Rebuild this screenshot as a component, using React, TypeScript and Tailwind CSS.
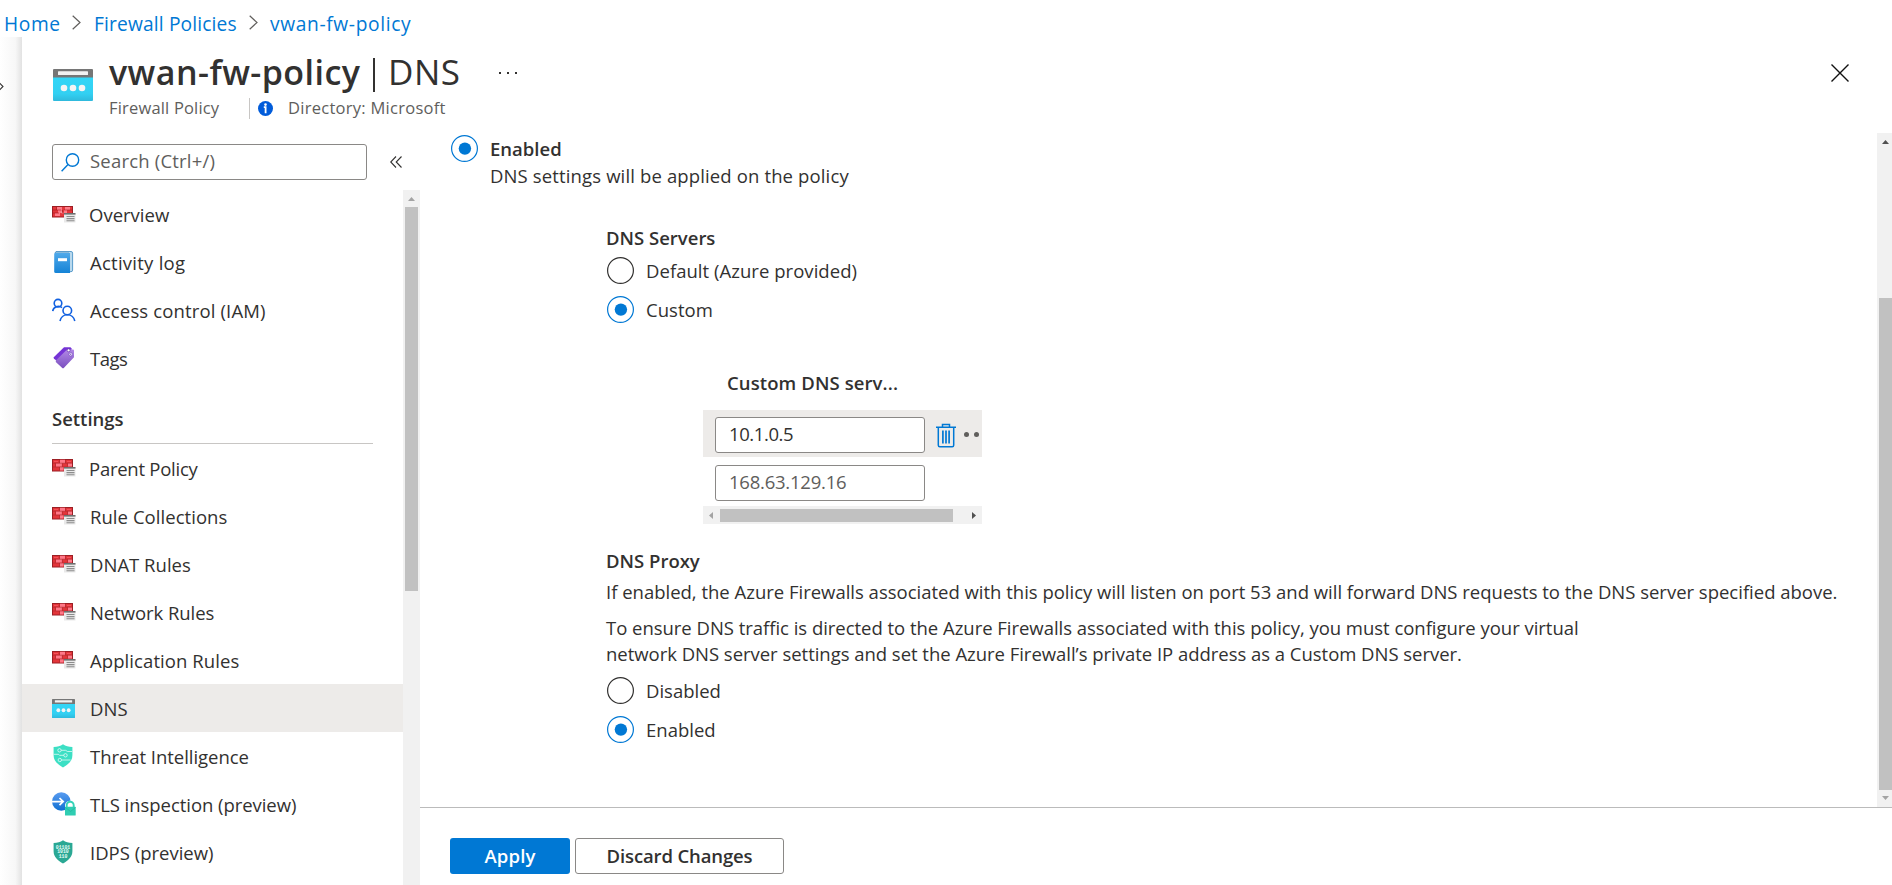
import React from 'react';

function FirewallIcon({ variant = 0 }: { variant?: number }) {
  const y = variant === 1 ? 4 : 3;
  return (
    <svg width="24" height="24" viewBox="0 0 24 24">
      <rect x="0.5" y={y + 0.5} width="20" height={14.5 - y} fill="#e3353a" stroke="#9c1f24" />
      {variant === 1 ? (
        <>
          <path d="M5 6.5h5M13 6.5h5M6 9.5h3.5M12 9.5h3M3 12.500h5" stroke="#ff7b88" strokeWidth="3" />
          <path d="M1 8h8M12 8h8M4.500 5v3M10.500 8v3M1 11h6" stroke="#a01a20" strokeWidth="0.6" />
          <path d="M9.500 8.500v2.500h2" stroke="#fff" strokeOpacity="0.5" strokeWidth="0.7" fill="none" />
        </>
      ) : (
        <>
          <path d="M8 5.500h5M4 9h6M16 9h4M8 12.800h3.500" stroke="#ff7888" strokeWidth="3.400" />
          <path d="M1 7.200h19.500M1 11h19.500M7.500 4v3M13.500 4v3M3.500 7.500v3M10.300 7.500v3M15.500 7.500v3M7.500 11v3.500" stroke="#a3262b" strokeOpacity="0.800" strokeWidth="0.700" />
          <path d="M2 5.500h4M15 5.500h4" stroke="#f4525a" strokeWidth="1" />
        </>
      )}
      <rect x="12" y="11.500" width="11.500" height="9" fill="#e9e9e9" />
      <rect x="12" y="11" width="11.500" height="1.600" fill="#6f6f6f" />
      <path d="M14.500 14.500h8M14.500 16.600h8M14.500 18.700h8" stroke="#8d8d8d" strokeWidth="1.100" />
    </svg>
  );
}

function LogIcon() {
  return (
    <svg width="24" height="24" viewBox="0 0 24 24">
      <defs>
        <linearGradient id="logg" x1="0" y1="0" x2="0" y2="1">
          <stop offset="0" stopColor="#4fa9ea" />
          <stop offset="1" stopColor="#1583d6" />
        </linearGradient>
      </defs>
      <path d="M4 1.500h15a1.600 1.600 0 0 1 1.600 1.600v17a1.600 1.600 0 0 1-1.600 1.600H17V3H3z" fill="#b9d9ee" stroke="#4b93c6" strokeWidth="0.9" />
      <path d="M2.200 3.800Q2.200 3 3.200 3H18v20H3.700a1.500 1.500 0 0 1-1.500-1.500z" fill="url(#logg)" />
      <rect x="6" y="8.200" width="9" height="3" fill="#fff" />
    </svg>
  );
}

function PeopleIcon() {
  return (
    <svg width="24" height="24" viewBox="0 0 24 24" fill="none" stroke="#1160e0" strokeWidth="1.600">
      <circle cx="6" cy="5.200" r="3.800" />
      <path d="M0.700 13.200a5.600 5.600 0 0 1 9.300-3.500" />
      <circle cx="15.300" cy="12.500" r="4.300" />
      <path d="M8 23a7.500 7.500 0 0 1 14.800 0" />
    </svg>
  );
}

function TagIcon() {
  return (
    <svg width="24" height="24" viewBox="0 0 24 24">
      <defs>
        <linearGradient id="tagg" x1="0" y1="0" x2="0" y2="1">
          <stop offset="0" stopColor="#b288e6" />
          <stop offset="1" stopColor="#7a4fbf" />
        </linearGradient>
      </defs>
      <path d="M1.500 11.500 12 1.300h6.500L20 3 7 16.500 2 12.800z" fill="#7533d6" />
      <path d="M3.800 14.500 15 3.500h6a1 1 0 0 1 1 1v6.700L12 21.800a1.400 1.400 0 0 1-2 0L3.800 16z" fill="url(#tagg)" />
      <circle cx="16.600" cy="4.300" r="1.500" fill="#fff" stroke="#5b2aa5" strokeWidth="0.700" />
      <circle cx="18.700" cy="8.300" r="1.700" fill="#fff" stroke="#6a3cb5" strokeWidth="0.600" />
      <circle cx="18.700" cy="8.300" r="0.700" fill="#7a4fbf" />
    </svg>
  );
}

function DnsIcon({ className }: { className: string }) {
  return (
    <svg className={className} viewBox="0 0 40 32" preserveAspectRatio="none">
      <defs>
        <linearGradient id="dnsg" x1="0" y1="0" x2="0" y2="1">
          <stop offset="0" stopColor="#33d6f7" />
          <stop offset="0.700" stopColor="#32d0f2" />
          <stop offset="1" stopColor="#2fb9dc" />
        </linearGradient>
      </defs>
      <path d="M0 8h40v23a1 1 0 0 1-1 1H1a1 1 0 0 1-1-1z" fill="url(#dnsg)" />
      <path d="M0 1a1 1 0 0 1 1-1h38a1 1 0 0 1 1 1v7.500H0z" fill="#767676" />
      <rect x="5" y="2.200" width="30" height="3.800" rx="0.500" fill="#f2f2f2" />
      <circle cx="11" cy="19" r="3.300" fill="#f4f4f4" />
      <circle cx="20" cy="19" r="3.300" fill="#f4f4f4" />
      <circle cx="29" cy="19" r="3.300" fill="#f4f4f4" />
    </svg>
  );
}

const SHIELD = 'M12 0.300c2.600 1.900 5.500 2.400 9.400 2.600v8.300c0 6-4.600 9.500-9.400 12.300-4.800-2.800-9.400-6.300-9.400-12.300V2.900C6.500 2.700 9.400 2.200 12 0.300z';

function ThreatIcon() {
  return (
    <svg width="24" height="24" viewBox="0 0 24 24" className="-ml-px -mt-px mr-px">
      <path d={SHIELD} fill="#3cdfc4" />
      <g fill="none" stroke="#fff" strokeOpacity="0.750" strokeWidth="0.900">
        <circle cx="8.500" cy="6.300" r="1.700" />
        <path d="M10.200 6.300h4.300l2 1.200h4.500" />
        <circle cx="14.500" cy="11.300" r="1.700" />
        <path d="M12.800 11.300H8.500l-1-1H2.800" />
        <circle cx="8.800" cy="16" r="1.700" />
        <path d="M10.500 16h9" />
      </g>
    </svg>
  );
}

function TlsIcon() {
  return (
    <svg width="24" height="24" viewBox="0 0 24 24">
      <defs>
        <linearGradient id="tlsg" x1="0" y1="0" x2="0" y2="1">
          <stop offset="0" stopColor="#5a9cf0" />
          <stop offset="1" stopColor="#0f6fd2" />
        </linearGradient>
      </defs>
      <circle cx="9.300" cy="9.500" r="9.300" fill="url(#tlsg)" />
      <path d="M0 9.600h10.500M7.500 6l3.700 3.600-3.700 3.600" fill="none" stroke="#fff" strokeWidth="1.700" />
      <path d="M13 15V12.500a5.500 5.500 0 0 1 10.500 0V15z" fill="#fff" />
      <path d="M14.700 15.500v-2.300a3.500 3.500 0 0 1 7 0v2.300" fill="none" stroke="#35d3b8" strokeWidth="1.900" />
      <rect x="13" y="14.800" width="10.700" height="8.700" rx="0.600" fill="#2fcdb2" />
      <path d="m13.500 15.500 5 4 5-4" fill="none" stroke="#23b49a" strokeWidth="0.700" />
    </svg>
  );
}

function IdpsIcon() {
  return (
    <svg width="24" height="24" viewBox="0 0 24 24" className="-ml-px -mt-px mr-px">
      <path d={SHIELD} fill="#2aa894" />
      <g fill="#e8fff9" fontFamily="Liberation Mono, monospace" fontWeight="700" fontSize="4.800" textAnchor="middle">
        <text x="12" y="8.700">01101</text>
        <text x="12" y="13.400">1010</text>
        <text x="12" y="18.100">110</text>
      </g>
    </svg>
  );
}

function Radio({ checked = false }: { checked?: boolean }) {
  return (
    <svg width="27" height="27" viewBox="0 0 27 27" className="shrink-0">
      <circle cx="13.500" cy="13.500" r="12.900" fill="#fff" stroke={checked ? '#0078d4' : '#323130'} strokeWidth="1.200" />
      {checked && <circle cx="13.900" cy="13.600" r="6.200" fill="#0078d4" />}
    </svg>
  );
}

function Crumb() {
  return (
    <svg width="9" height="15" viewBox="0 0 9 15" fill="none" stroke="#605e5c" strokeWidth="1.200">
      <path d="m0.700 0.700 7.300 6.800-7.300 6.800" />
    </svg>
  );
}

type Item = { label: string; track: string; icon: React.ReactNode; active?: boolean };

const general: Item[] = [
  { label: 'Overview', track: 'pl-[13px]', icon: <FirewallIcon variant={1} /> },
  { label: 'Activity log', track: 'tracking-[0.254px] pl-[14px]', icon: <LogIcon /> },
  { label: 'Access control (IAM)', track: 'tracking-[0.142px] pl-[14px]', icon: <PeopleIcon /> },
  { label: 'Tags', track: 'tracking-[-0.5px] pl-[14px]', icon: <TagIcon /> },
];

const settings: Item[] = [
  { label: 'Parent Policy', track: 'tracking-[-0.25px] pl-[13px]', icon: <FirewallIcon /> },
  { label: 'Rule Collections', track: 'tracking-[0.051px] pl-[14px]', icon: <FirewallIcon /> },
  { label: 'DNAT Rules', track: 'tracking-[0.015px] pl-[14px]', icon: <FirewallIcon /> },
  { label: 'Network Rules', track: 'tracking-[-0.065px] pl-[14px]', icon: <FirewallIcon /> },
  { label: 'Application Rules', track: 'tracking-[0.082px] pl-[14px]', icon: <FirewallIcon /> },
  { label: 'DNS', track: 'tracking-[0.074px] pl-[14px]', icon: <DnsIcon className="h-[19px] w-[23px]" />, active: true },
  { label: 'Threat Intelligence', track: 'tracking-[-0.045px] pl-[14px]', icon: <ThreatIcon /> },
  { label: 'TLS inspection (preview)', track: 'tracking-[-0.048px] pl-[14px]', icon: <TlsIcon /> },
  { label: 'IDPS (preview)', track: 'pl-[14px]', icon: <IdpsIcon /> },
];

function NavRow({ item }: { item: Item }) {
  return (
    <a className={`flex h-12 shrink-0 items-center pl-[30px] ${item.active ? 'bg-[#edebe9]' : ''}`}>
      <span className="flex h-6 w-6 shrink-0 items-center">{item.icon}</span>
      <span className={`whitespace-nowrap pt-px ${item.track}`}>{item.label}</span>
    </a>
  );
}

export default function App() {
  return (
    <div className="flex h-[885px] w-[1892px] flex-col overflow-hidden bg-white font-['Open_Sans',sans-serif] text-[18.5px] leading-[26px] text-[#323130]">
      <nav className="flex h-[37px] shrink-0 items-center pl-1 pt-[11px] text-[19.2px] text-[#0078d4]">
        <span className="w-[68px] tracking-[0.6px]">Home</span>
        <span className="flex w-[22px] pb-1"><Crumb /></span>
        <span className="w-[155px] whitespace-nowrap tracking-[0.147px]">Firewall Policies</span>
        <span className="flex w-[21px] pb-1"><Crumb /></span>
        <span className="whitespace-nowrap tracking-[0.637px]">vwan-fw-policy</span>
      </nav>

      <div className="flex min-h-0 flex-1">
        <div className="w-[22px] shrink-0 bg-linear-to-r from-white via-[#f7f7f7] via-70% to-[#e2e2e2] pt-[45px]">
          <svg width="4" height="9" viewBox="0 0 4 9" fill="none" stroke="#323130" strokeWidth="1.100">
            <path d="M-1 0.500 3 4.500-1 8.500" />
          </svg>
        </div>

        <div className="flex min-w-0 flex-1 flex-col bg-white">
          <header className="flex h-24 shrink-0 pl-[31px]">
            <DnsIcon className="mt-8 h-8 w-10 shrink-0" />
            <div className="ml-4 mt-[11px] flex-1">
              <h1 className="flex h-12 items-center whitespace-nowrap text-[34px] leading-[48px]">
                <span className="w-[264px] font-semibold tracking-[0.45px]">vwan-fw-policy</span>
                <span className="mt-[5px] h-[34px] w-[2px] bg-[#323130]" />
                <span className="w-[107px] pl-[13px] text-[35px] font-normal tracking-[0.5px]">DNS</span>
                <span className="mt-0.5 flex gap-[6px] pl-[17px]">
                  <i className="size-[2px] bg-[#323130]" />
                  <i className="size-[2px] bg-[#323130]" />
                  <i className="size-[2px] bg-[#323130]" />
                </span>
              </h1>
              <div className="mt-px flex h-[22px] items-center whitespace-nowrap text-[16.5px] leading-[22px] text-[#605e5c]">
                <span className="w-[140px] tracking-[0.18px]">Firewall Policy</span>
                <span className="h-[21px] w-px bg-[#c8c6c4]" />
                <svg width="15" height="15" viewBox="0 0 15 15" className="ml-2">
                  <circle cx="7.500" cy="7.500" r="7.500" fill="#015cda" />
                  <circle cx="7.500" cy="3.600" r="1.300" fill="#fff" />
                  <path d="M5.800 6.200h1.800v6" stroke="#fff" strokeWidth="1.800" fill="none" />
                </svg>
                <span className="pl-[15px] tracking-[0.27px]">Directory: Microsoft</span>
              </div>
            </div>
            <svg width="18" height="18" viewBox="0 0 18 18" className="mr-[43px] mt-[27px]" stroke="#111" strokeWidth="1.400">
              <path d="m0.500 0.500 17 17M17.500 0.500l-17 17" />
            </svg>
          </header>

          <div className="flex min-h-0 flex-1">
            <aside className="flex w-[398px] shrink-0 flex-col">
              <div className="flex h-[57px] shrink-0 pl-[30px] pt-[11px]">
                <div className="flex h-9 w-[315px] items-center rounded-[3px] border border-[#8a8886] pl-2">
                  <svg width="19" height="19" viewBox="0 0 19 19" fill="none" stroke="#0078d4" strokeWidth="1.400">
                    <circle cx="11.500" cy="7" r="6.200" />
                    <path d="M7 11.500 0.600 18.200" />
                  </svg>
                  <span className="pb-0.5 pl-[10px] tracking-[0.201px] text-[#605e5c]">Search (Ctrl+/)</span>
                </div>
                <svg width="12" height="12" viewBox="0 0 12 12" className="ml-[23px] mt-[12px]" fill="none" stroke="#323130" strokeWidth="1.100">
                  <path d="M6 0.500 0.700 6 6 11.500M11.500 0.500 6.200 6l5.300 5.500" />
                </svg>
              </div>
              <div className="flex min-h-0 flex-1">
                <div className="flex min-w-0 flex-1 flex-col overflow-hidden">
                  {general.map((i) => <NavRow key={i.label} item={i} />)}
                  <div className="ml-[30px] mr-[30px] flex h-[62px] shrink-0 items-end border-b border-[#c8c6c4] pb-[11px] font-semibold tracking-[-0.02px]">
                    Settings
                  </div>
                  {settings.map((i) => <NavRow key={i.label} item={i} />)}
                </div>
                <div className="flex w-[17px] shrink-0 flex-col items-center bg-[#f1f1f1]">
                  <svg width="17" height="17" viewBox="0 0 17 17" className="shrink-0"><path d="M5 11h7L8.500 7z" fill="#a3a3a3" /></svg>
                  <div className="mr-px h-[384px] w-[13px] bg-[#c1c1c1]" />
                </div>
              </div>
            </aside>

            <main className="flex min-w-0 flex-1 flex-col">
              <div className="flex h-[674px] shrink-0">
                <div className="flex flex-1 flex-col pl-[31px] pt-0.5">
                  <div className="flex">
                    <Radio checked />
                    <div className="pl-3 pt-px">
                      <div className="h-[27px] font-semibold">Enabled</div>
                      <div className="tracking-[0.135px]">DNS settings will be applied on the policy</div>
                    </div>
                  </div>

                  <section className="pl-[155px] pt-9">
                    <h2 className="mb-1.5 font-semibold">DNS Servers</h2>
                    <label className="mb-3 flex h-[27px] items-center gap-3 pl-px">
                      <Radio /><span className="tracking-[0.039px]">Default (Azure provided)</span>
                    </label>
                    <label className="flex h-[27px] items-center gap-3 pl-px">
                      <Radio checked /><span className="tracking-[0.05px]">Custom</span>
                    </label>

                    <div className="ml-[97px] mt-[47px] w-[279px]">
                      <div className="mb-[14px] pl-6 font-semibold tracking-[0.1px]">Custom DNS serv...</div>
                      <div className="flex h-[47px] items-center bg-[#edebe9] pl-3">
                        <div className="mt-[3px] flex h-9 w-[210px] items-center rounded-[3px] border border-[#8a8886] bg-white pb-0.5 pl-[13px] tracking-[-0.413px]">10.1.0.5</div>
                        <svg width="20" height="25" viewBox="0 0 20 25" className="ml-[11px] mt-[3px]" fill="none" stroke="#0078d4" strokeWidth="1.500">
                          <path d="M0 4.200h20M6.500 4V1.500h7V4M2.300 4.500v17.700a1.500 1.500 0 0 0 1.500 1.500h12.400a1.500 1.500 0 0 0 1.500-1.500V4.500" />
                          <path d="M6.900 7.500v13M10 7.500v13M13.100 7.500v13" strokeWidth="1.700" />
                        </svg>
                        <span className="ml-[8px] mt-0.5 flex gap-[5px]">
                          <i className="size-[5px] rounded-full bg-[#605e5c]" />
                          <i className="size-[5px] rounded-full bg-[#605e5c]" />
                        </span>
                      </div>
                      <div className="ml-3 mt-2 flex h-9 w-[210px] items-center rounded-[3px] border border-[#8a8886] pb-0.5 pl-[13px] tracking-[-0.232px] text-[#605e5c]">168.63.129.16</div>
                      <div className="mt-[5px] flex h-[18px] items-center bg-[#f1f1f1]">
                        <svg width="17" height="17" viewBox="0 0 17 17"><path d="M10 5v7L6 8.500z" fill="#a3a3a3" /></svg>
                        <div className="h-[13px] w-[233px] bg-[#c1c1c1]" />
                        <svg width="17" height="17" viewBox="0 0 17 17" className="ml-auto"><path d="M7 5v7l4-3.500z" fill="#505050" /></svg>
                      </div>
                    </div>

                    <h2 className="mt-6 font-semibold">DNS Proxy</h2>
                    <p className="mt-[5px] whitespace-nowrap tracking-[-0.007px]">If enabled, the Azure Firewalls associated with this policy will listen on port 53 and will forward DNS requests to the DNS server specified above.</p>
                    <p className="mt-[10px] whitespace-nowrap tracking-[-0.028px]">
                      To ensure DNS traffic is directed to the Azure Firewalls associated with this policy, you must configure your virtual<br />
                      network DNS server settings and set the Azure Firewall’s private IP address as a Custom DNS server.
                    </p>
                    <label className="mb-3 mt-[10px] flex h-[27px] items-center gap-3 pl-px">
                      <Radio /><span>Disabled</span>
                    </label>
                    <label className="flex h-[27px] items-center gap-3 pl-px">
                      <Radio checked /><span>Enabled</span>
                    </label>
                  </section>
                </div>
                <div className="flex w-[15px] shrink-0 flex-col bg-[#f1f1f1]">
                  <svg width="15" height="17" viewBox="0 0 15 17" className="shrink-0"><path d="M5 11h7L8.500 7z" fill="#505050" /></svg>
                  <div className="ml-0.5 mt-[148px] h-[492px] bg-[#c1c1c1]" />
                  <svg width="15" height="17" viewBox="0 0 15 17" className="shrink-0"><path d="M5 6h7L8.500 10z" fill="#a3a3a3" /></svg>
                </div>
              </div>
              <footer className="flex flex-1 gap-[5px] border-t border-[#bbbbbb] pl-[30px] pt-[30px] font-semibold">
                <button className="h-9 w-[120px] rounded-[3px] bg-[#0078d4] tracking-[0.144px] text-white">Apply</button>
                <button className="h-9 w-[209px] rounded-[3px] border border-[#8a8886] tracking-[-0.13px]">Discard Changes</button>
              </footer>
            </main>
          </div>
        </div>
      </div>
    </div>
  );
}
